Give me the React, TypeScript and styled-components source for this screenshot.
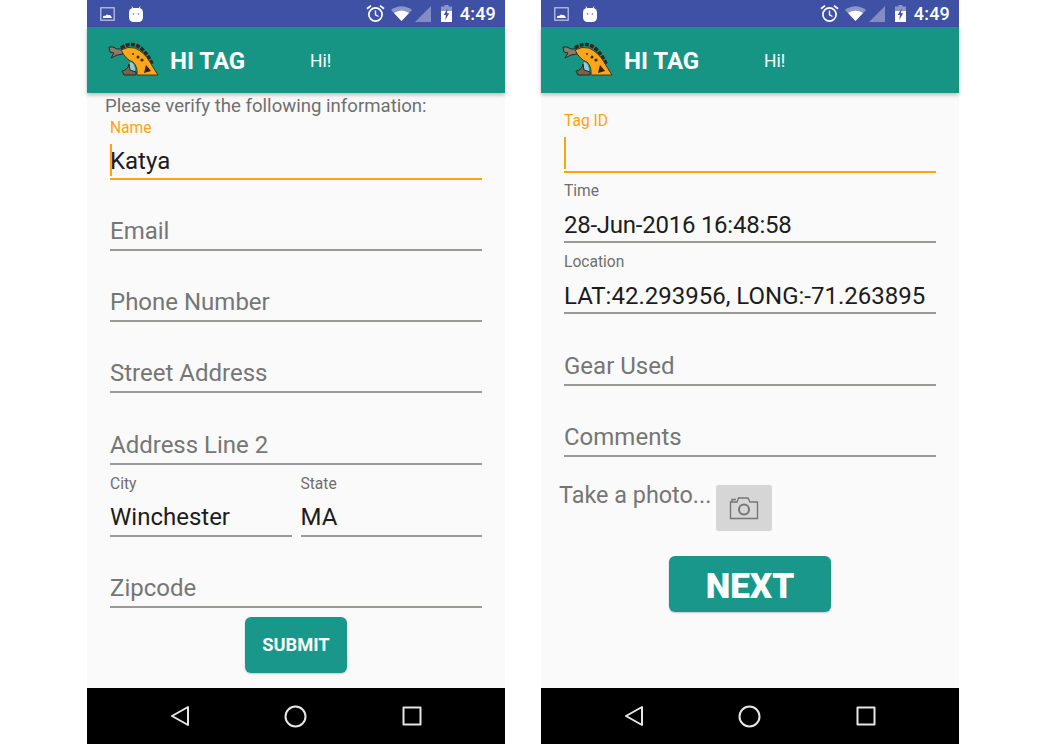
import React from "react";
import styled, { createGlobalStyle } from "styled-components";

const GlobalStyle = createGlobalStyle`
  html, body {
    margin: 0;
    padding: 0;
    background: #fff;
    font-family: Roboto, "Noto Sans", sans-serif;
  }
`;

const Page = styled.div`
  display: flex;
  gap: 36px;
  width: 1045px;
  height: 744px;
  padding-left: 87px;
  box-sizing: border-box;
  overflow: hidden;
`;

const Phone = styled.div`
  display: flex;
  flex-direction: column;
  width: 418px;
  height: 744px;
  background: #fafafa;
`;

const StatusBar = styled.div`
  display: flex;
  align-items: center;
  height: 27px;
  flex: none;
  padding: 0 9px 0 13px;
  background: #3f51a5;
  color: #fff;
`;

const StatusLeft = styled.div`
  display: flex;
  align-items: center;
  gap: 14px;
`;

const StatusRight = styled.div`
  display: flex;
  align-items: center;
  margin-left: auto;
`;

const Clock = styled.span`
  margin-left: 8px;
  font-size: 18px;
  font-weight: 500;
  letter-spacing: 0.2px;
`;

const AppBar = styled.div`
  display: flex;
  align-items: center;
  height: 66px;
  flex: none;
  padding: 2px 0 0 21px;
  box-sizing: border-box;
  background: #169584;
  box-shadow: 0 2px 4px rgba(0, 0, 0, 0.25);
  color: #fff;
  position: relative;
`;

const Title = styled.span`
  margin-left: 8px;
  width: 140px;
  font-size: 24px;
  font-weight: 700;
`;

const Greeting = styled.span`
  font-size: 17.5px;
`;

const Content = styled.div`
  display: flex;
  flex-direction: column;
  flex: 1;
  padding: 0 23px;
`;

const Intro = styled.div`
  margin: 2px 0 0 -5px;
  font-size: 18.6px;
  line-height: 23px;
  color: #6f6f6f;
  white-space: nowrap;
`;

const Row = styled.div`
  display: flex;
  gap: 9px;
`;

const Field = styled.div<{ $h: number; $active?: boolean }>`
  position: relative;
  display: flex;
  flex: none;
  flex-direction: column;
  justify-content: flex-end;
  height: ${(p) => p.$h}px;
  border-bottom: 2px solid ${(p) => (p.$active ? "#ffa40d" : "#9a9a96")};
  box-sizing: border-box;
`;

const HalfField = styled(Field)`
  flex: 1;
`;

const FieldLabel = styled.span<{ $active?: boolean; $low?: boolean }>`
  margin-bottom: ${(p) => (p.$low ? 4 : 5)}px;
  font-size: 15.6px;
  line-height: 20px;
  color: ${(p) => (p.$active ? "#ffa40d" : "#6f6f6f")};
`;

const FieldValue = styled.span<{ $hint?: boolean; $low?: boolean; $tight?: boolean }>`
  height: 36px;
  padding-top: ${(p) => (p.$low ? 3 : 1)}px;
  box-sizing: border-box;
  font-size: 24px;
  line-height: 34px;
  letter-spacing: ${(p) => (p.$tight ? "-0.25px" : "0")};
  color: ${(p) => (p.$hint ? "#767676" : "#1c1c1c")};
  white-space: nowrap;
`;

const Caret = styled.span`
  position: absolute;
  left: 0;
  bottom: 2px;
  width: 2px;
  height: 32px;
  background: #ffa40d;
`;

const SubmitButton = styled.button`
  align-self: center;
  width: 102px;
  height: 56px;
  margin-top: 9px;
  padding: 0 0 2px;
  border: 0;
  border-radius: 6px;
  background: #18978a;
  box-shadow: 0 1px 2px rgba(0, 0, 0, 0.2);
  color: #fff;
  font-family: inherit;
  font-size: 18.3px;
  font-weight: 700;
`;

const NextButton = styled(SubmitButton)`
  width: 162px;
  margin-top: 25px;
  padding: 4px 0 0;
  font-size: 35px;
  font-weight: 900;
`;

const PhotoRow = styled.div`
  display: flex;
  align-items: flex-start;
  margin: 28px 0 0 -5px;
`;

const PhotoLabel = styled.span`
  width: 157px;
  font-size: 23.4px;
  line-height: 20px;
  color: #767676;
  white-space: nowrap;
`;

const PhotoButton = styled.div`
  display: flex;
  align-items: center;
  justify-content: center;
  width: 56px;
  height: 46px;
  border-radius: 2px;
  background: #d6d6d6;
`;

const NavBar = styled.div`
  display: flex;
  align-items: center;
  justify-content: space-around;
  height: 56px;
  flex: none;
  padding: 0 36px;
  background: #000;
`;

const ImageIcon = () => (
  <svg width="15" height="14" viewBox="0 0 15 14">
    <rect x="0.8" y="0.8" width="13.4" height="12.4" fill="none" stroke="#c5cae4" strokeWidth="1.2" />
    <path d="M3 11 V9.5 Q4 8.2 5.2 9 Q6.5 6.5 8.5 8 Q10 7.5 11 9 L12 11 Z" fill="#fff" />
  </svg>
);

const BotIcon = () => (
  <svg width="14" height="16" viewBox="0 0 14 16">
    <path d="M3 0.5 L4.2 3 M11 0.5 L9.8 3" stroke="#dfe1f0" strokeWidth="1" />
    <rect x="0" y="2" width="14" height="14" rx="4.5" fill="#fff" />
    <circle cx="4.5" cy="8" r="0.9" fill="#8c97c9" />
    <circle cx="9.5" cy="8" r="0.9" fill="#8c97c9" />
  </svg>
);

const AlarmIcon = () => (
  <svg width="19" height="19" viewBox="0 0 19 19" fill="none" stroke="#fff">
    <circle cx="9.5" cy="10.5" r="6.6" strokeWidth="1.7" />
    <path d="M9.5 6.5 V10.8 L12.5 12.5" strokeWidth="1.4" />
    <path d="M1 4.8 L5 1.6 M18 4.8 L14 1.6" strokeWidth="1.8" />
  </svg>
);

const WifiIcon = () => (
  <svg width="21" height="15" viewBox="0 0 21 15" style={{ marginLeft: 6 }}>
    <path d="M0 4 Q10.5 -3.5 21 4 L10.5 15 Z" fill="#fff" opacity="0.4" />
    <path d="M3 7 Q10.5 2 18 7 L10.5 15 Z" fill="#fff" />
  </svg>
);

const SignalIcon = () => (
  <svg width="16" height="16" viewBox="0 0 16 16" style={{ marginLeft: 3 }}>
    <path d="M16 0 V16 H0 Z" fill="#fff" opacity="0.35" />
  </svg>
);

const BatteryIcon = () => (
  <svg width="11" height="17" viewBox="0 0 11 17" style={{ marginLeft: 10 }}>
    <path d="M3.5 0 H7.5 V1.5 H11 V6 H0 V1.5 H3.5 Z" fill="#fff" opacity="0.4" />
    <path d="M0 6 H11 V17 H0 Z" fill="#fff" />
    <path d="M6.5 3.5 L2.8 10 H5 L4.2 15 L8.2 8.2 H6 Z" fill="#3f51a5" />
  </svg>
);

const Logo = () => (
  <svg width="54" height="40" viewBox="0 1 54 40" style={{ flex: "none" }}>
    <path d="M1 7 L5 7 L9 9 L15 9 L15 14 L9 15 L3 18 L6 13 L2 12 Z" fill="#8a7d6b" stroke="#2c2620" strokeWidth="1" />
    <path d="M13 8 Q20 3 28 5 Q38 10 44 24" fill="none" stroke="#33261e" strokeWidth="3.6" strokeDasharray="4 1.3" />
    <path d="M13 10 Q20 6 27 8 Q36 12 42 22 Q46 29 50 35 L29 35 Q30 27 25 22 Q18 20 13 10 Z" fill="#fda61a" stroke="#3a2a1c" strokeWidth="0.9" />
    <path d="M22 22 Q27 22 27 32 L21 31 Z" fill="#8fcbdc" />
    <path d="M14 31 Q20 30 21 24 L22 30 L28 32 L28 35 L16 35 Z" fill="#7a6248" stroke="#2c2620" strokeWidth="1" />
    <path d="M38 25 L43 31 L36 33 Z" fill="#2a2320" />
    <circle cx="30" cy="17" r="1.5" fill="#3a2a1c" />
    <circle cx="34" cy="20" r="1.6" fill="#3a2a1c" />
    <circle cx="25" cy="14" r="1" fill="#3a2a1c" />
  </svg>
);

const CameraIcon = () => (
  <svg width="30" height="24" viewBox="0 0 30 24" fill="none" stroke="#767676" strokeWidth="1.4">
    <path d="M1.5 6 H8 L9.5 2 H19 L21 6 H28.5 V22.5 H1.5 Z" />
    <path d="M3 6 V3.5 H7" />
    <circle cx="15" cy="13.5" r="5" strokeWidth="2" />
  </svg>
);

const Navigation = () => (
  <NavBar>
    <svg width="20" height="22" viewBox="0 0 20 22" fill="none" stroke="#e6e6e6" strokeWidth="2" strokeLinejoin="round">
      <path d="M18 2 V20 L2 11 Z" />
    </svg>
    <svg width="23" height="23" viewBox="0 0 23 23" fill="none" stroke="#e6e6e6" strokeWidth="2">
      <circle cx="11.5" cy="11.5" r="10" />
    </svg>
    <svg width="20" height="20" viewBox="0 0 20 20" fill="none" stroke="#e6e6e6" strokeWidth="2" strokeLinejoin="round">
      <rect x="1.5" y="1.5" width="17" height="17" />
    </svg>
  </NavBar>
);

const Shell: React.FC<{ children: React.ReactNode }> = ({ children }) => (
  <Phone>
    <StatusBar>
      <StatusLeft>
        <ImageIcon />
        <BotIcon />
      </StatusLeft>
      <StatusRight>
        <AlarmIcon />
        <WifiIcon />
        <SignalIcon />
        <BatteryIcon />
        <Clock>4:49</Clock>
      </StatusRight>
    </StatusBar>
    <AppBar>
      <Logo />
      <Title>HI TAG</Title>
      <Greeting>Hi!</Greeting>
    </AppBar>
    <Content>{children}</Content>
    <Navigation />
  </Phone>
);

const App: React.FC = () => (
  <Page>
    <GlobalStyle />
    <Shell>
      <Intro>Please verify the following information:</Intro>
      <Field $h={62} $active>
        <FieldLabel $active>Name</FieldLabel>
        <FieldValue>Katya</FieldValue>
        <Caret />
      </Field>
      <Field $h={71}>
        <FieldValue $hint>Email</FieldValue>
      </Field>
      <Field $h={71}>
        <FieldValue $hint>Phone Number</FieldValue>
      </Field>
      <Field $h={71}>
        <FieldValue $hint>Street Address</FieldValue>
      </Field>
      <Field $h={72}>
        <FieldValue $hint>Address Line 2</FieldValue>
      </Field>
      <Row>
        <HalfField $h={72}>
          <FieldLabel>City</FieldLabel>
          <FieldValue>Winchester</FieldValue>
        </HalfField>
        <HalfField $h={72}>
          <FieldLabel>State</FieldLabel>
          <FieldValue>MA</FieldValue>
        </HalfField>
      </Row>
      <Field $h={71}>
        <FieldValue $hint>Zipcode</FieldValue>
      </Field>
      <SubmitButton>SUBMIT</SubmitButton>
    </Shell>
    <Shell>
      <Field $h={80} $active>
        <FieldLabel $active $low>Tag ID</FieldLabel>
        <FieldValue />
        <Caret />
      </Field>
      <Field $h={70}>
        <FieldLabel $low>Time</FieldLabel>
        <FieldValue $low $tight>28-Jun-2016 16:48:58</FieldValue>
      </Field>
      <Field $h={71}>
        <FieldLabel $low>Location</FieldLabel>
        <FieldValue $low>LAT:42.293956, LONG:-71.263895</FieldValue>
      </Field>
      <Field $h={72}>
        <FieldValue $hint>Gear Used</FieldValue>
      </Field>
      <Field $h={71}>
        <FieldValue $hint>Comments</FieldValue>
      </Field>
      <PhotoRow>
        <PhotoLabel>Take a photo...</PhotoLabel>
        <PhotoButton>
          <CameraIcon />
        </PhotoButton>
      </PhotoRow>
      <NextButton>NEXT</NextButton>
    </Shell>
  </Page>
);

export default App;
